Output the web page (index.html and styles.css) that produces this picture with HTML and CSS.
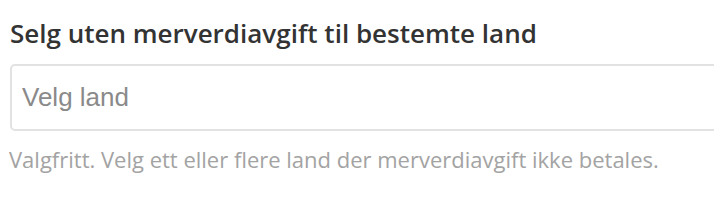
FILE: index.html
```html
<!DOCTYPE html>
<html lang="no">
<head>
<meta charset="utf-8">
<link rel="stylesheet" href="styles.css">
</head>
<body>
<div class="field">
  <label class="field-label" for="land">Selg uten merverdiavgift til bestemte land</label>
  <div class="select">
    <input id="land" class="select-input" type="text" placeholder="Velg land">
  </div>
  <p class="help">Valgfritt. Velg ett eller flere land der merverdiavgift ikke betales.</p>
</div>
</body>
</html>
```

FILE: styles.css
```css
html, body {
  margin: 0;
  padding: 0;
  background: #fff;
}
.field {
  padding: 15px 0 0 10px;
  display: flex;
  flex-direction: column;
}
.field-label {
  font-family: "Open Sans", sans-serif;
  font-weight: 600;
  font-size: 26px;
  line-height: 36px;
  color: #333;
}
.select {
  margin-top: 13px;
  width: 730px;
  box-sizing: border-box;
  height: 67px;
  border: 2px solid #e2e2e2;
  border-radius: 5px;
  display: flex;
  align-items: center;
  padding: 0 10px;
}
.select-input {
  border: none;
  outline: none;
  background: transparent;
  font-family: "Liberation Sans", Arial, sans-serif;
  font-size: 26px;
  color: #333;
  padding: 0;
  width: 100%;
}
.select-input::placeholder {
  color: #8a8a8a;
}
.help {
  margin: 13px 0 0 -1px;
  font-family: "Open Sans", sans-serif;
  font-size: 22px;
  line-height: 30px;
  color: #a3a3a3;
}
```
